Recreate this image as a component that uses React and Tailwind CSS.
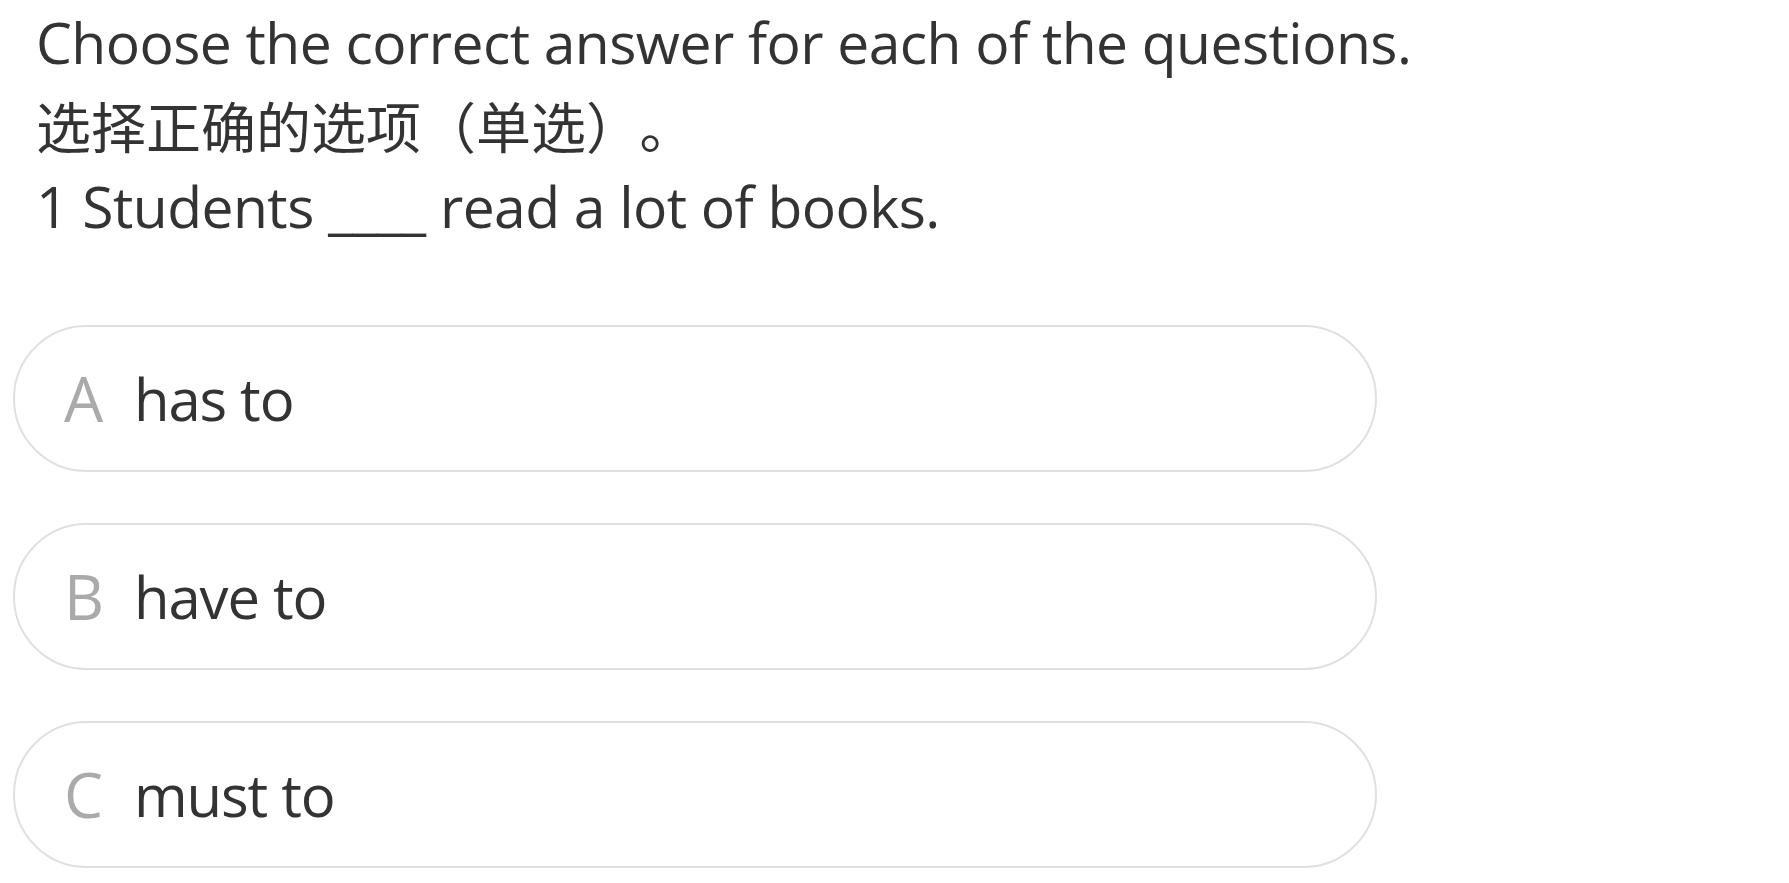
import React from 'react';

const options = [
  { key: 'A', text: 'has to' },
  { key: 'B', text: 'have to' },
  { key: 'C', text: 'must to' },
];

export default function App() {
  return (
    <div className="min-h-screen bg-white text-[#333] font-['Open_Sans','Noto_Sans_CJK_SC',sans-serif]">
      {/* Question */}
      <div className="pl-[36px] pt-[1px] text-[57px] leading-[82px] tracking-[-0.55px]">
        <p>Choose the correct answer for each of the questions.</p>
        <p className="font-['Noto_Sans_CJK_SC',sans-serif] text-[55px] tracking-normal">
          选择正确的选项<span>（单选）</span><span className="ml-[26px]">。</span>
        </p>
        <p>1 Students ____ read a lot of books.</p>
      </div>

      {/* Options */}
      <div className="mt-[78px] pl-[13px] flex flex-col gap-[51px]">
        {options.map((o) => (
          <div
            key={o.key}
            className="w-[1364px] h-[147px] rounded-full border-2 border-[#e0e0e0] flex items-center pl-[49px]"
          >
            <span className="text-[#aaa] text-[62px] w-[70px]">{o.key}</span>
            <span className="text-[58px] tracking-[-1.1px]">{o.text}</span>
          </div>
        ))}
      </div>
    </div>
  );
}
